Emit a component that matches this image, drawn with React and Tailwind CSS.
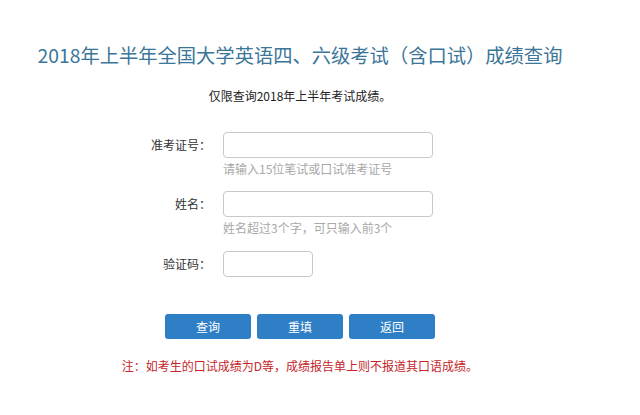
import React from 'react';

const font = { fontFamily: '"Noto Sans CJK SC", "Microsoft YaHei", sans-serif' };

function Field({ label, width, hint, className }) {
  return (
    <div className={className}>
      <div className="flex items-center">
        <label className="w-[113px] text-right text-[12px] leading-[16px] text-[#333] pr-[2px]">{label}</label>
        <input
          type="text"
          className={`ml-[10px] h-[26px] ${width} rounded-[4px] border border-[#c8c8c8] bg-white outline-none`}
        />
      </div>
      {hint && (
        <div className="pl-[123px] mt-[3px] text-[12px] leading-[16px] text-[#a8a8a8]">{hint}</div>
      )}
    </div>
  );
}

export default function App() {
  return (
    <div className="w-[640px] h-[415px] bg-white overflow-hidden" style={font}>
      <div className="w-[600px] pt-[43px]">
        <h1 className="text-center text-[19.3px] leading-[24px] font-normal text-[#3b7598]">
          2018年上半年全国大学英语四、六级考试（含口试）成绩查询
        </h1>
        <p className="mt-[21px] text-center text-[12px] leading-[16px] text-[#222]">
          仅限查询2018年上半年考试成绩。
        </p>

        <div className="ml-[100px] mt-[28px]">
          <Field label="准考证号：" width="w-[210px]" hint="请输入15位笔试或口试准考证号" />
          <Field className="mt-[14px]" label="姓名：" width="w-[210px]" hint="姓名超过3个字，可只输入前3个" />
          <Field className="mt-[15px]" label="验证码：" width="w-[90px]" />
        </div>

        <div className="mt-[37px] flex justify-center gap-[6px]">
          {['查询', '重填', '返回'].map((t) => (
            <button
              key={t}
              className="w-[86px] h-[25px] rounded-[3px] bg-[#2f7fc6] text-white text-[12px] leading-[25px]"
            >
              {t}
            </button>
          ))}
        </div>

        <p className="mt-[19px] text-center text-[12px] leading-[16px] text-[#c4262b]">
          注：如考生的口试成绩为D等，成绩报告单上则不报道其口语成绩。
        </p>
      </div>
    </div>
  );
}
